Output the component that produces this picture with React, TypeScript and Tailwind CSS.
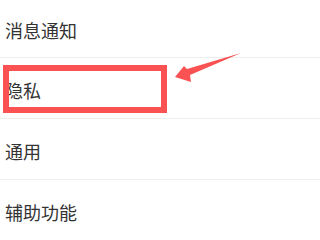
import React from 'react';

const items = ['消息通知', '隐私', '通用', '辅助功能'];

export default function App() {
  return (
    <div
      className="relative w-[320px] h-[240px] overflow-hidden bg-white"
      style={{ fontFamily: '"Noto Sans CJK SC", "Noto Sans", sans-serif' }}
    >
      <div className="flex flex-col">
        {items.map((label, i) => (
          <div
            key={label}
            className={`flex items-center pl-[5px] pt-[3px] border-b border-[#eeeeee] ${
              i === 0 ? 'h-[58px]' : 'h-[61px]'
            }`}
          >
            <span className="text-[18px] leading-none text-[#333333]">{label}</span>
          </div>
        ))}
      </div>

      {/* highlight box */}
      <div className="absolute left-[3px] top-[65px] w-[164px] h-[48px] border-[6px] border-[#fa5252]" />

      {/* arrow */}
      <svg className="absolute left-0 top-0" width="320" height="240" viewBox="0 0 320 240">
        <polygon
          points="175,77 184,66 187,69 241,53 190,75 191,82"
          fill="#fa5252"
        />
      </svg>
    </div>
  );
}
